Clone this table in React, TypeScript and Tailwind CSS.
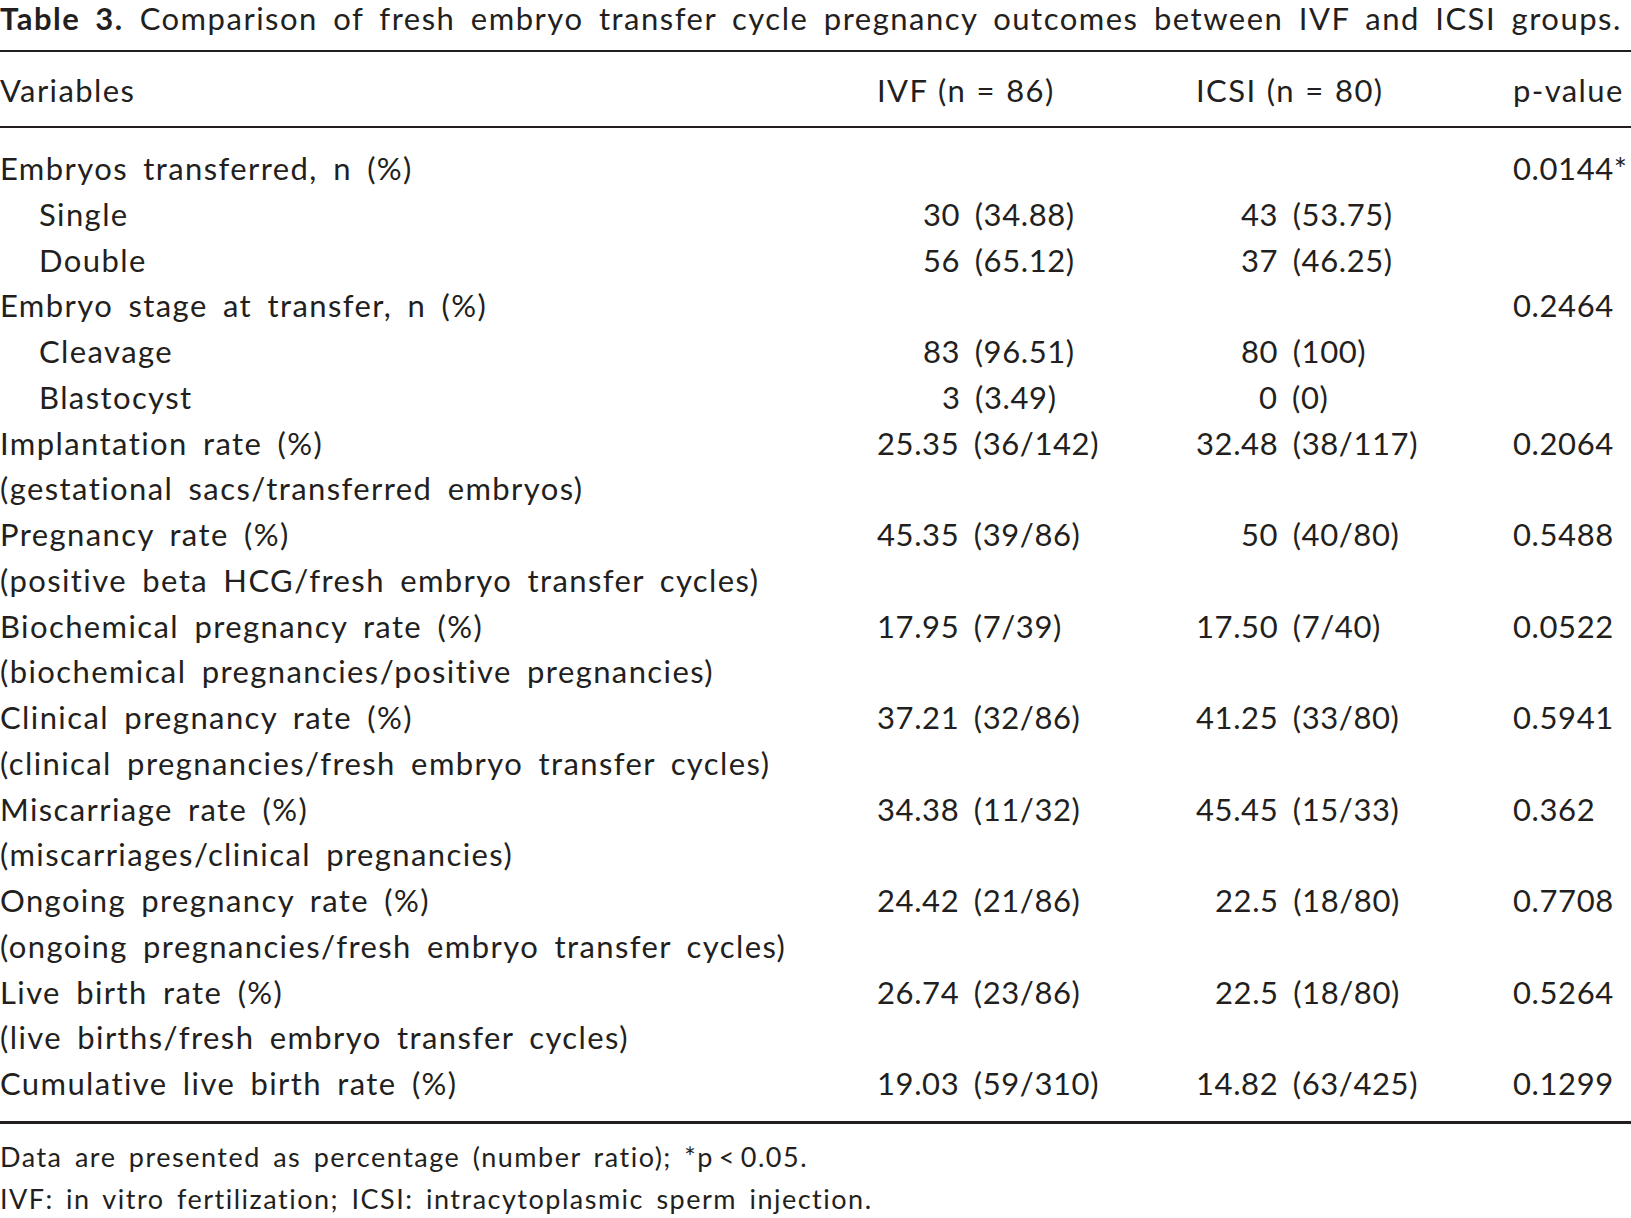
import React from "react";

type Row = {
  label: string;
  indent?: boolean;
  ivf?: string;
  ivfPad?: string;
  icsi?: string;
  icsiPad?: string;
  p?: string;
};

const rows: Row[] = [
  { label: "Embryos transferred, n (%)", p: "0.0144*" },
  { label: "Single", indent: true, ivf: "30 (34.88)", ivfPad: "pl-[46px]", icsi: "43 (53.75)", icsiPad: "pl-[45px]" },
  { label: "Double", indent: true, ivf: "56 (65.12)", ivfPad: "pl-[46px]", icsi: "37 (46.25)", icsiPad: "pl-[45px]" },
  { label: "Embryo stage at transfer, n (%)", p: "0.2464" },
  { label: "Cleavage", indent: true, ivf: "83 (96.51)", ivfPad: "pl-[46px]", icsi: "80 (100)", icsiPad: "pl-[45px]" },
  { label: "Blastocyst", indent: true, ivf: "3 (3.49)", ivfPad: "pl-[65px]", icsi: "0 (0)", icsiPad: "pl-[63px]" },
  { label: "Implantation rate (%)", ivf: "25.35 (36/142)", icsi: "32.48 (38/117)", p: "0.2064" },
  { label: "(gestational sacs/transferred embryos)" },
  { label: "Pregnancy rate (%)", ivf: "45.35 (39/86)", icsi: "50 (40/80)", icsiPad: "pl-[45px]", p: "0.5488" },
  { label: "(positive beta HCG/fresh embryo transfer cycles)" },
  { label: "Biochemical pregnancy rate (%)", ivf: "17.95 (7/39)", icsi: "17.50 (7/40)", p: "0.0522" },
  { label: "(biochemical pregnancies/positive pregnancies)" },
  { label: "Clinical pregnancy rate (%)", ivf: "37.21 (32/86)", icsi: "41.25 (33/80)", p: "0.5941" },
  { label: "(clinical pregnancies/fresh embryo transfer cycles)" },
  { label: "Miscarriage rate (%)", ivf: "34.38 (11/32)", icsi: "45.45 (15/33)", p: "0.362" },
  { label: "(miscarriages/clinical pregnancies)" },
  { label: "Ongoing pregnancy rate (%)", ivf: "24.42 (21/86)", icsi: "22.5 (18/80)", icsiPad: "pl-[19px]", p: "0.7708" },
  { label: "(ongoing pregnancies/fresh embryo transfer cycles)" },
  { label: "Live birth rate (%)", ivf: "26.74 (23/86)", icsi: "22.5 (18/80)", icsiPad: "pl-[19px]", p: "0.5264" },
  { label: "(live births/fresh embryo transfer cycles)" },
  { label: "Cumulative live birth rate (%)", ivf: "19.03 (59/310)", icsi: "14.82 (63/425)", p: "0.1299" },
];

const cols = "grid grid-cols-[877px_319px_317px_1fr]";

export default function App() {
  return (
    <div className="w-[1631px] min-h-[1218px] bg-white text-[#231f20] font-['Lato',sans-serif] text-[31px] tracking-[1.4px] [word-spacing:6px] whitespace-nowrap">
      {/* caption */}
      <div className="h-[38px] leading-[36px] tracking-[1.5px]">
        <span className="font-bold">Table 3.</span>
        <span className="ml-[16px]">Comparison of fresh embryo transfer cycle pregnancy outcomes between IVF and ICSI groups.</span>
      </div>

      <div className="mt-[12px] h-[2px] bg-[#231f20]" />

      <div className={`${cols} h-[74px] items-center pt-[3px]`}>
        <div>Variables</div>
        <div className="[word-spacing:1px]">IVF (n = 86)</div>
        <div className="[word-spacing:1px]">ICSI (n = 80)</div>
        <div>p-value</div>
      </div>

      <div className="h-[2px] bg-[#231f20]" />

      <div className="pt-[17px] pb-[15px]">
        {rows.map((r, i) => (
          <div key={i} className={`${cols} h-[45.76px] items-center`}>
            <div className={r.indent ? "pl-[39px]" : ""}>{r.label}</div>
            <div className={`tracking-[0.6px] ${r.ivfPad ?? ""}`}>{r.ivf}</div>
            <div className={`tracking-[0.6px] ${r.icsiPad ?? ""}`}>{r.icsi}</div>
            <div className="tracking-[0.6px]">{r.p}</div>
          </div>
        ))}
      </div>

      <div className="h-[3px] bg-[#231f20]" />

      <div className="pt-[12px] text-[27px] leading-[42px] tracking-[1.5px] [word-spacing:4px]">
        <div>Data are presented as percentage (number ratio); *p&#8201;&lt;&#8201;0.05.</div>
        <div>IVF: in vitro fertilization; ICSI: intracytoplasmic sperm injection.</div>
      </div>
    </div>
  );
}
